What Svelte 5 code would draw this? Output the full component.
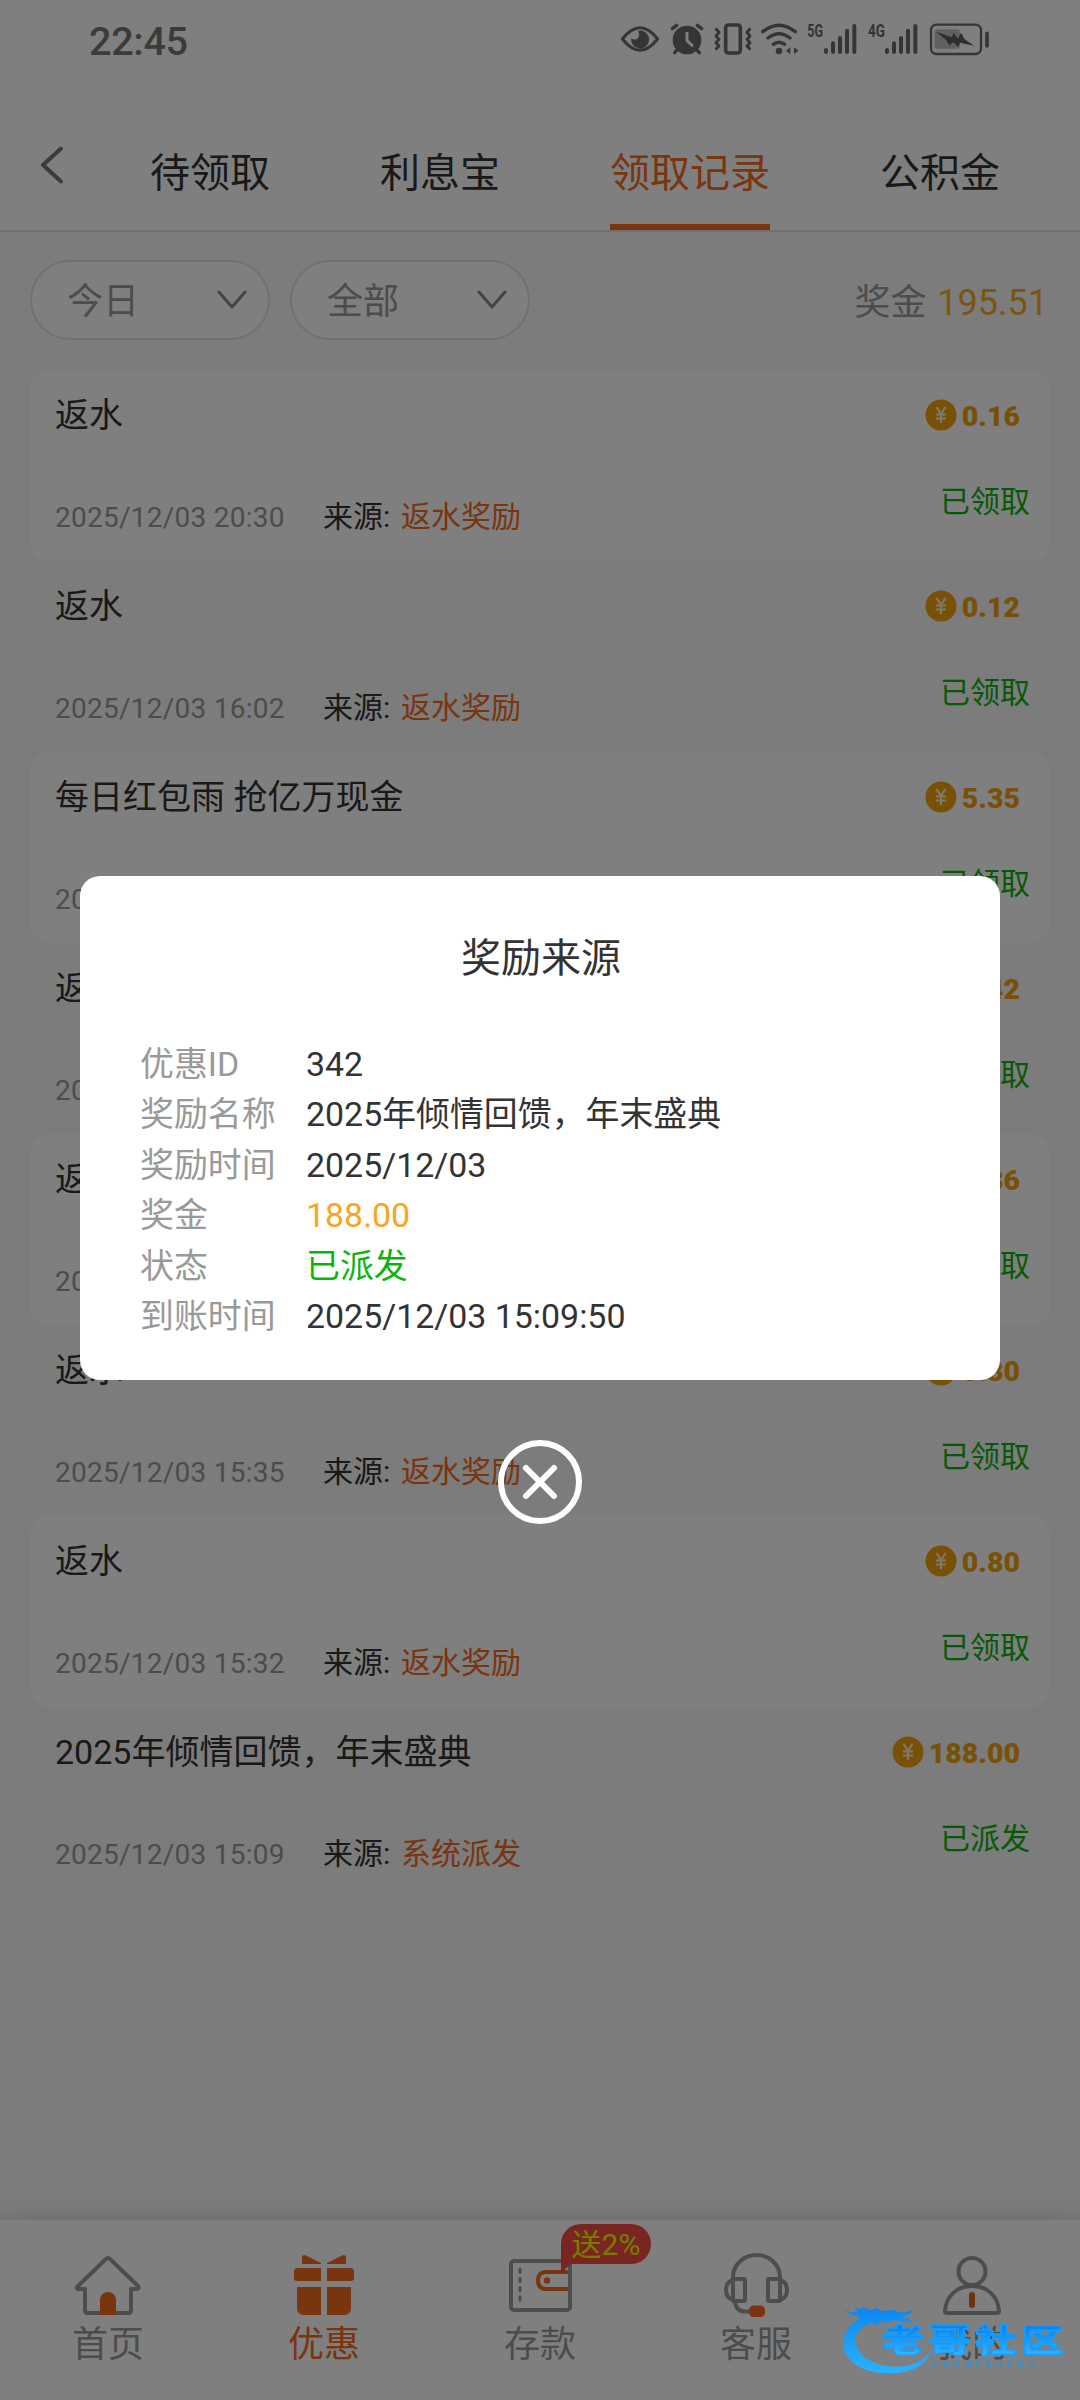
<script>
  const tabs = ['待领取', '利息宝', '领取记录', '公积金'];
  const activeTab = '领取记录';
  const filters = ['今日', '全部'];

  const records = [
    { title: '返水', amount: '0.16', time: '2025/12/03 20:30', source: '返水奖励', status: '已领取' },
    { title: '返水', amount: '0.12', time: '2025/12/03 16:02', source: '返水奖励', status: '已领取' },
    { title: '每日红包雨 抢亿万现金', amount: '5.35', time: '2025/12/03 15:58', source: '红包雨', status: '已领取' },
    { title: '返水', amount: '0.42', time: '2025/12/03 15:46', source: '返水奖励', status: '已领取' },
    { title: '返水', amount: '0.36', time: '2025/12/03 15:40', source: '返水奖励', status: '已领取' },
    { title: '返水', amount: '0.30', time: '2025/12/03 15:35', source: '返水奖励', status: '已领取' },
    { title: '返水', amount: '0.80', time: '2025/12/03 15:32', source: '返水奖励', status: '已领取' },
    { title: '2025年倾情回馈，年末盛典', amount: '188.00', time: '2025/12/03 15:09', source: '系统派发', status: '已派发' },
  ];

  const details = [
    { label: '优惠ID', value: '342' },
    { label: '奖励名称', value: '2025年倾情回馈，年末盛典' },
    { label: '奖励时间', value: '2025/12/03' },
    { label: '奖金', value: '188.00', tone: 'gold' },
    { label: '状态', value: '已派发', tone: 'green' },
    { label: '到账时间', value: '2025/12/03 15:09:50' },
  ];

  const nav = [
    { id: 'home', label: '首页' },
    { id: 'gift', label: '优惠' },
    { id: 'wallet', label: '存款', badge: '送2%' },
    { id: 'service', label: '客服' },
    { id: 'mine', label: '我的' },
  ];
</script>

<div class="screen">
  <div class="statusbar">
    <span class="clock">22:45</span>
    <svg class="sysicons" viewBox="0 0 1170 180" fill="none" stroke="#6a6a6a" stroke-linecap="round" stroke-linejoin="round">
      <!-- eye -->
      <path d="M37 87Q90 20 143 87Q90 154 37 87Z" stroke-width="9" />
      <path d="M88 62A27 27 0 1 1 64 84Q72 92 82 86Q92 78 84 64Z" fill="#6a6a6a" stroke="none" />
      <!-- alarm -->
      <circle cx="231" cy="90" r="43" fill="#6a6a6a" stroke="none" />
      <path d="M187 56L200 46M275 56L262 46M203 118L194 128M259 118L268 128" stroke-width="10" />
      <path d="M231 70V92L246 106" stroke="#fff" stroke-width="9" />
      <!-- vibrate -->
      <rect x="347" y="45" width="44" height="84" rx="8" stroke-width="11" />
      <path d="M319 58L327 67L318 78L327 88L318 98L327 108L319 116M419 58L411 67L420 78L411 88L420 98L411 108L419 116" stroke-width="9" />
      <!-- wifi -->
      <path d="M458 65Q507 26 556 65M474 84Q507 58 540 84M490 103Q507 90 524 103" stroke-width="10" />
      <circle cx="507" cy="123" r="10" fill="#6a6a6a" stroke="none" />
      <path d="M541 112V132L528 122ZM552 112V132L566 122Z" fill="#6a6a6a" stroke="none" />
      <!-- signals -->
      <g stroke-width="12">
        <path d="M648 120V126M669 100V126M690 84V126M711 62V126M733 48V126" />
        <path d="M831 120V126M852 100V126M873 84V126M894 62V126M916 48V126" />
      </g>
      <!-- battery -->
      <rect x="963" y="44" width="150" height="88" rx="16" stroke-width="7" />
      <rect x="974" y="58" width="76" height="58" rx="8" fill="#c2c2c2" stroke="none" />
      <path d="M978 65L1026 82L1030 68L1044 86L1053 68L1063 87L1092 107L1050 98L1044 110L1030 97L1018 106L1008 90Z" fill="#5c5c5c" stroke="none" />
      <path d="M1131 70V108" stroke-width="11" />
      <g class="net">
        <text x="592" y="81" textLength="47" lengthAdjust="spacingAndGlyphs">5G</text>
        <text x="774" y="81" textLength="51" lengthAdjust="spacingAndGlyphs">4G</text>
      </g>
    </svg>
  </div>

  <header class="header">
    <svg class="back" viewBox="0 0 24 38"><path d="M21 2.500L3 19L21 35.500" /></svg>
    <nav class="tabs">
      {#each tabs as tab}
        <span class="tab" class:active={tab === activeTab}>{tab}</span>
      {/each}
    </nav>
  </header>

  <main class="content">
    <div class="filters">
      {#each filters as filter}
        <div class="pill">
          <span>{filter}</span>
          <svg viewBox="0 0 30 20"><path d="M2 2L15 17L28 2" /></svg>
        </div>
      {/each}
      <div class="total">奖金 <b>195.51</b></div>
    </div>

    <ul class="records">
      {#each records as r}
        <li class="record">
          <div class="left">
            <span class="title">{r.title}</span>
            <div class="meta">
              <span class="time">{r.time}</span>
              <span class="from">来源:</span>
              <span class="source">{r.source}</span>
            </div>
          </div>
          <div class="right">
            <div class="amount">
              <svg viewBox="0 0 32 32">
                <circle cx="16" cy="16" r="15.500" fill="#f0a00c" />
                <path d="M11.500 8L16 15L20.500 8M16 15V24M11 15.500H21M11 19.500H21" fill="none" stroke="#fff3da" stroke-width="2.200" />
              </svg>
              <span>{r.amount}</span>
            </div>
            <span class="status">{r.status}</span>
          </div>
        </li>
      {/each}
    </ul>
  </main>

  <footer class="navbar">
    {#each nav as item}
      <div class="item" class:current={item.id === 'gift'}>
        <svg viewBox="0 0 72 66" fill="none" stroke="#9a9a9a" stroke-width="4" stroke-linejoin="round" stroke-linecap="round">
          {#if item.id === 'home'}
            <path d="M13 37V58Q13 61 16 61H56Q59 61 59 58V37H64Q68 37 66 34L38 7Q36 5 34 7L6 34Q3 37 7 37H13" />
            <path d="M28 63V48A8 8 0 0 1 44 48V63Z" fill="#f26a20" stroke="none" />
          {:else if item.id === 'gift'}
            <g fill="#f26a20" stroke="none">
              <path d="M14 12V6Q14 2 18 3.500L33 11V12ZM58 12V6Q58 2 54 3.500L39 11V12Z" />
              <path d="M33 16V29H9Q6 29 6 26V20Q6 16 10 16ZM39 16V29H63Q66 29 66 26V20Q66 16 62 16Z" />
              <path d="M33 35V63H16Q9 63 9 56V35ZM39 35V63H56Q63 63 63 56V35Z" />
            </g>
          {:else if item.id === 'wallet'}
            <rect x="7" y="9" width="59" height="49" rx="3" />
            <path d="M16 17V50" stroke-width="3" stroke-dasharray="3.500 5.700" />
            <path d="M64 20H42Q34 20 34 28.500T42 37H64" stroke="#f26a20" stroke-linecap="butt" />
            <circle cx="43" cy="28.500" r="3.200" fill="#f26a20" stroke="none" />
          {:else if item.id === 'service'}
            <path d="M13 27V25A23.500 22 0 0 1 60 25V27" />
            <rect x="13" y="27" width="12" height="22" rx="1" />
            <rect x="48" y="27" width="12" height="22" rx="1" />
            <path d="M13 28Q6 30 6 38T13 48M60 28Q67 30 67 38T60 48M15 50Q16 59 24 59.500H31" />
            <rect x="29" y="53.500" width="16" height="11.500" rx="4.500" fill="#f26a20" stroke="none" />
          {:else}
            <circle cx="36" cy="19.500" r="13.500" />
            <path d="M9 59C10 44 21 34 36 34S62 44 63 59Q63 61 61 61H11Q9 61 9 59Z" />
            <path d="M36 43V53" stroke="#e0661f" stroke-width="6" />
          {/if}
        </svg>
        <span>{item.label}</span>
        {#if item.badge}
          <em class="badge">{item.badge}</em>
        {/if}
      </div>
    {/each}
  </footer>
</div>

<div class="overlay">
  <section class="dialog">
    <h2>奖励来源</h2>
    <dl>
      {#each details as d}
        <div class="row">
          <dt>{d.label}</dt>
          <dd class={d.tone ?? ''}>{d.value}</dd>
        </div>
      {/each}
    </dl>
  </section>
  <svg class="close" viewBox="0 0 84 84"><circle cx="42" cy="42" r="39" /><path d="M28 28L56 56M56 28L28 56" /></svg>
</div>

<div class="watermark">
  <svg viewBox="0 0 750 300">
    <defs>
      <linearGradient id="wm" x1="0" y1="0" x2="0" y2="1">
        <stop offset="0" stop-color="#0a86f0" />
        <stop offset="1" stop-color="#2cb2ff" />
      </linearGradient>
    </defs>
    <path fill="url(#wm)" d="M38 60L62 67L86 62L72 51L100 57L92 47L120 60L138 54L158 64L190 59L212 68L252 60L234 75L212 79L238 87L248 98L214 94L192 91L172 98L152 95L134 107L128 98C98 106 78 125 76 150C78 192 122 226 190 230C240 232 285 214 302 180C296 224 244 250 180 250C100 250 44 216 40 165C38 132 58 102 88 88L84 78L62 73Z" />
  </svg>
  <div class="brand">
    <strong>老哥社区</strong>
    <small>LAOGESHEQU</small>
  </div>
</div>

<style>
  :global(body) {
    margin: 0;
    background: #f8f8f8;
  }
  .screen,
  .overlay,
  .watermark {
    font-family: Roboto, 'Noto Sans CJK SC', sans-serif;
  }
  .screen {
    width: 1080px;
    height: 2400px;
    display: flex;
    flex-direction: column;
    background: #f8f8f8;
    overflow: hidden;
    color: #333;
  }
  .statusbar {
    height: 80px;
    flex: none;
    display: flex;
    justify-content: space-between;
    align-items: flex-start;
    padding: 10px 80px 0 89px;
    box-sizing: border-box;
    background: #fff;
  }
  .clock {
    font-size: 39.500px;
    font-weight: 500;
    line-height: 64px;
    letter-spacing: -0.3px;
    color: #777;
  }
  .sysicons {
    width: 390px;
    height: 60px;
  }
  .net {
    fill: #6a6a6a;
    stroke: none;
    font-size: 54px;
    font-weight: 700;
  }
  .header {
    height: 152px;
    flex: none;
    box-sizing: border-box;
    display: flex;
    align-items: stretch;
    background: #fff;
    border-bottom: 2px solid #e2e2e2;
  }
  .back {
    width: 24px;
    height: 38px;
    margin: 66px 0 0 40px;
    fill: none;
    stroke: #777;
    stroke-width: 4;
    stroke-linecap: round;
    stroke-linejoin: round;
  }
  .tabs {
    display: flex;
    gap: 110px;
    margin-left: 86px;
  }
  .tab {
    font-size: 40px;
    line-height: 187px;
    height: 150px;
    box-sizing: border-box;
    white-space: nowrap;
  }
  .tab.active {
    color: #f26a20;
    border-bottom: 6px solid #f26a20;
  }
  .content {
    flex: 1;
    padding: 28px 30px 0;
  }
  .filters {
    display: flex;
    align-items: center;
    gap: 20px;
    height: 80px;
    margin-bottom: 30px;
  }
  .pill {
    width: 240px;
    height: 80px;
    box-sizing: border-box;
    border: 2px solid #e2e2e2;
    border-radius: 40px;
    background: #fff;
    display: flex;
    align-items: center;
    justify-content: space-between;
    padding: 0 21px 0 35px;
    font-size: 36px;
    color: #999;
  }
  .pill span {
    padding-bottom: 4px;
  }
  .pill svg {
    width: 30px;
    height: 20px;
    fill: none;
    stroke: #8a8a8a;
    stroke-width: 3;
    stroke-linecap: round;
    stroke-linejoin: round;
  }
  .total {
    margin-left: auto;
    padding: 0 2px 3px 0;
    font-size: 36px;
    color: #999;
    white-space: nowrap;
  }
  .total b {
    font-weight: 400;
    color: #f5ac20;
    margin-left: 2px;
  }
  .records {
    list-style: none;
    margin: 0;
    padding: 0;
  }
  .record {
    height: 191px;
    box-sizing: border-box;
    padding: 20px 20px 0 25px;
    border-radius: 20px;
    display: flex;
    justify-content: space-between;
  }
  .record:nth-child(odd) {
    background: #fff;
  }
  .left,
  .right {
    display: flex;
    flex-direction: column;
  }
  .left {
    gap: 54px;
  }
  .right {
    align-items: flex-end;
    gap: 38px;
  }
  .title {
    font-size: 34px;
    line-height: 50px;
  }
  .meta {
    display: flex;
    line-height: 46px;
    font-size: 30px;
  }
  .time {
    font-size: 28px;
    letter-spacing: 0.25px;
    line-height: 47px;
    color: #999;
    width: 268px;
  }
  .from {
    width: 78px;
  }
  .source {
    color: #f26a20;
  }
  .amount {
    display: flex;
    align-items: center;
    gap: 5px;
    height: 50px;
    padding-right: 10px;
    font-size: 28.500px;
    font-weight: 900;
    color: #f0a00c;
  }
  .amount span {
    padding-top: 2px;
  }
  .amount svg {
    width: 32px;
    height: 32px;
  }
  .status {
    font-size: 30px;
    line-height: 47px;
    color: #0db30d;
  }
  .navbar {
    height: 180px;
    flex: none;
    display: grid;
    grid-template-columns: repeat(5, 1fr);
    background: #fff;
    box-shadow: 0 0 22px rgba(0, 0, 0, 0.16);
  }
  .item {
    position: relative;
    display: flex;
    flex-direction: column;
    align-items: center;
    padding-top: 32px;
    font-size: 36px;
    line-height: 54px;
    color: #999;
  }
  .item svg {
    width: 72px;
    height: 66px;
  }
  .item.current {
    color: #f26a20;
  }
  .badge {
    position: absolute;
    left: 129px;
    top: 4px;
    width: 90px;
    height: 40px;
    border-radius: 20px 20px 20px 0;
    background: #f24a42;
    color: #f4f400;
    font-style: normal;
    font-size: 30px;
    line-height: 42px;
    text-align: center;
    z-index: 1;
  }
  .badge::after {
    content: '';
    position: absolute;
    left: 0;
    top: 39px;
    width: 11px;
    height: 10px;
    background: #f24a42;
    clip-path: polygon(0 0, 100% 0, 0 100%);
  }
  .overlay {
    position: fixed;
    inset: 0;
    z-index: 5;
    background: rgba(0, 0, 0, 0.5);
    display: flex;
    flex-direction: column;
    align-items: center;
    padding-top: 876px;
    gap: 60px;
  }
  .dialog {
    width: 920px;
    height: 504px;
    box-sizing: border-box;
    padding: 53px 60px 0;
    border-radius: 20px;
    background: #fff;
    color: #333;
  }
  h2 {
    margin: 0 0 51px;
    padding-left: 2px;
    font-size: 40px;
    font-weight: 400;
    line-height: 60px;
    text-align: center;
  }
  dl {
    margin: 0;
  }
  .row {
    display: flex;
    font-size: 33.900px;
    line-height: 50.400px;
  }
  dt {
    width: 166px;
    color: #999;
  }
  dd {
    margin: 0;
  }
  .gold {
    color: #f5a623;
  }
  .green {
    color: #0db30d;
  }
  .close {
    width: 84px;
    height: 84px;
    fill: none;
    stroke: #fff;
    stroke-width: 6;
    stroke-linecap: round;
  }
  .watermark {
    position: fixed;
    left: 830px;
    top: 2290px;
    width: 250px;
    height: 100px;
    z-index: 6;
  }
  .watermark svg {
    width: 250px;
    height: 100px;
  }
  .brand {
    position: absolute;
    left: 52px;
    top: 32px;
    display: flex;
    flex-direction: column;
    white-space: nowrap;
  }
  .brand strong {
    font-size: 36px;
    font-weight: 900;
    line-height: 38px;
    letter-spacing: 4.500px;
    transform: scale(1.15, 0.88);
    transform-origin: 0 50%;
    background: linear-gradient(#0a86f0 15%, #2cb2ff 85%);
    background-clip: text;
    -webkit-background-clip: text;
    color: transparent;
    -webkit-text-stroke: 1.500px #1c9cf8;
  }
  .brand small {
    margin: -1px 0 0 51px;
    font-size: 10px;
    line-height: 12px;
    letter-spacing: 4.200px;
    font-weight: 700;
    color: #2a92dd;
    opacity: 0.8;
  }
</style>
